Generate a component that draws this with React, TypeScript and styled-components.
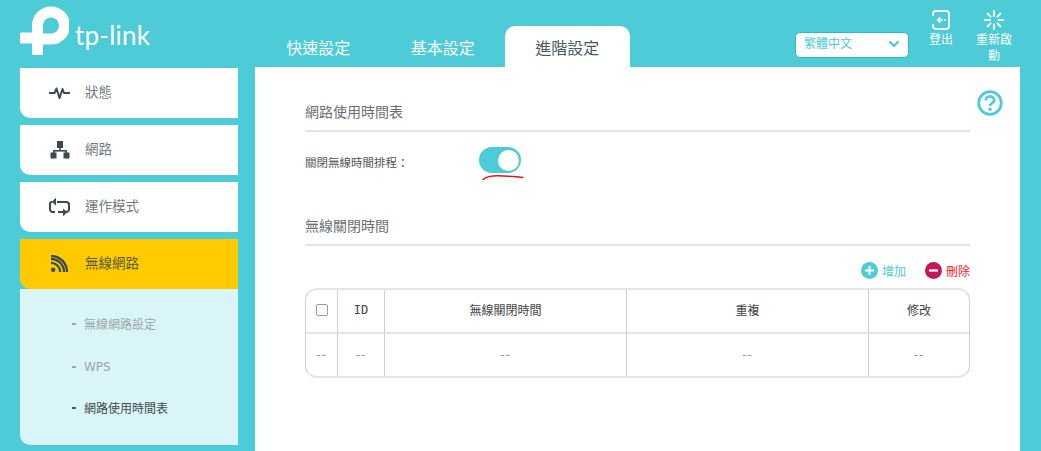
import React from "react";
import styled, { createGlobalStyle } from "styled-components";

const TEAL = "#4dcbd7";
const FONT = `"DejaVu Sans", "Noto Sans CJK TC", "Noto Sans", sans-serif`;

const Global = createGlobalStyle`
  html, body { margin: 0; padding: 0; background: ${TEAL}; }
  * { box-sizing: border-box; }
  body { font-family: ${FONT}; }
`;

const Page = styled.div`
  width: 1041px;
  height: 451px;
  overflow: hidden;
  background: ${TEAL};
  display: flex;
  flex-direction: column;
`;

const Header = styled.header`
  height: 67px;
  flex: none;
  display: flex;
  align-items: flex-start;
`;

const Logo = styled.div`
  width: 256px;
  height: 67px;
  padding: 6px 0 0 20px;
  display: flex;
  align-items: flex-start;
  gap: 6px;
  flex: none;
`;

const LogoWord = styled.span`
  font-family: "Lato", "Open Sans", sans-serif;
  font-weight: 400;
  font-size: 26px;
  line-height: 30px;
  letter-spacing: 0.2px;
  color: #fff;
  margin-top: 14px;
`;

const Tabs = styled.nav`
  display: flex;
  padding-top: 26px;
  height: 67px;
  width: 539px;
  flex: none;
`;

const Tab = styled.div<{ $active?: boolean }>`
  width: 124.5px;
  height: 41px;
  display: flex;
  align-items: center;
  justify-content: center;
  font-size: 16px;
  border-radius: 10px 10px 0 0;
  color: ${(p) => (p.$active ? "#4a5a63" : "#fff")};
  background: ${(p) => (p.$active ? "#fff" : "transparent")};
`;

const LangSelect = styled.div`
  width: 114px;
  height: 26px;
  margin-top: 32px;
  flex: none;
  background: #fff;
  border: 1px solid #33b5c2;
  border-radius: 5px;
  padding: 0 8px 2px 8px;
  display: flex;
  align-items: center;
  justify-content: space-between;
  color: ${TEAL};
  font-size: 12px;
  line-height: 22px;
`;

const HeadActions = styled.div`
  display: flex;
  align-items: flex-start;
  margin-left: 14px;
  gap: 15px;
`;

const HeadAction = styled.div<{ $w: number }>`
  width: ${(p) => p.$w}px;
  padding-top: 10px;
  display: flex;
  flex-direction: column;
  align-items: center;
  text-align: center;
  color: #fff;
  font-size: 12px;
  line-height: 16px;
  svg { margin-bottom: 2px; }
`;

const Body = styled.div`
  flex: 1;
  min-height: 0;
  display: flex;
  padding: 0 21px 0 20px;
  gap: 17px;
`;

const Sidebar = styled.aside`
  width: 218px;
  flex: none;
  padding-top: 1px;
  display: flex;
  flex-direction: column;
  gap: 7px;
`;

const MenuItem = styled.div<{ $active?: boolean }>`
  height: 50px;
  display: flex;
  align-items: center;
  padding-left: 29px;
  gap: 15px;
  font-size: 13.5px;
  color: ${(p) => (p.$active ? "#5a5a3c" : "#717a80")};
  background: ${(p) => (p.$active ? "#ffcb00" : "#fff")};
  border-radius: 0 0 0 10px;
`;

const MenuLabel = styled.span`
  margin-bottom: 5px;
`;

const MenuIcon = styled.span`
  width: 21px;
  height: 20px;
  display: flex;
  align-items: center;
  justify-content: center;
  flex: none;
  margin-bottom: 1px;
`;

const MenuGroup = styled.div``;

const SubMenu = styled.div`
  padding: 15px 0 15px 52px;
  background: #d9f5f7;
  border-radius: 0 0 0 10px;
  display: flex;
  flex-direction: column;
`;

const SubItem = styled.div<{ $current?: boolean; $latin?: boolean }>`
  height: 42px;
  padding-bottom: ${(p) => (p.$latin ? 0 : 4)}px;
  display: flex;
  align-items: center;
  gap: 8px;
  font-size: 12px;
  color: ${(p) => (p.$current ? "#3f4a50" : "#9aa6a9")};
  &::before {
    content: "";
    width: 4px;
    height: 1.5px;
    margin-top: ${(p) => (p.$latin ? 0 : 2)}px;
    background: ${(p) => (p.$current ? "#4a5a63" : "#9aa6a9")};
  }
`;

const Main = styled.main`
  position: relative;
  width: 765px;
  flex: none;
  background: #fff;
  padding: 37px 50px 0;
`;

const HelpButton = styled.div`
  position: absolute;
  top: 23px;
  right: 17px;
  width: 26px;
  height: 26px;
`;

const SectionTitle = styled.h2<{ $tall?: boolean }>`
  margin: 0;
  height: ${(p) => (p.$tall ? 29 : 28)}px;
  padding-top: ${(p) => (p.$tall ? 1 : 0)}px;
  font-size: 14px;
  font-weight: 400;
  line-height: 16px;
  color: #6a7073;
  border-bottom: 2px solid #e3e3e3;
`;

const SwitchRow = styled.div`
  display: flex;
  align-items: center;
  height: 30px;
  margin-top: 13px;
  margin-bottom: 42px;
`;

const SwitchLabel = styled.label`
  width: 174px;
  padding-top: 4px;
  font-size: 11.5px;
  color: #555;
`;

const SwitchWrap = styled.div`
  position: relative;
  width: 42px;
  height: 26px;
`;

const Track = styled.div`
  width: 42px;
  height: 26px;
  border-radius: 13px;
  background: ${TEAL};
  display: flex;
  align-items: center;
  justify-content: flex-end;
  padding-right: 2px;
`;

const Knob = styled.div`
  width: 21px;
  height: 21px;
  border-radius: 50%;
  background: #fff;
`;

const RedMark = styled.svg`
  position: absolute;
  left: 2px;
  top: 26px;
`;

const Toolbar = styled.div`
  display: flex;
  justify-content: flex-end;
  align-items: center;
  gap: 19px;
  height: 18px;
  margin-top: 15px;
`;

const ToolButton = styled.div<{ $color: string }>`
  display: flex;
  align-items: center;
  gap: 4px;
  font-size: 12px;
  color: ${(p) => p.$color};
`;

const TableFrame = styled.div`
  margin-top: 9px;
  height: 90px;
  border: 2px solid #e5e5e5;
  border-left: 1px solid #cfcfcf;
  border-right: 1px solid #cfcfcf;
  border-radius: 12px;
  overflow: hidden;
`;

const Table = styled.table`
  width: 100%;
  height: 100%;
  table-layout: fixed;
  border-collapse: separate;
  border-spacing: 0;
`;

const Th = styled.th`
  height: 44px;
  padding: 0 0 3px;
  font-size: 12px;
  font-weight: 400;
  color: #444;
  text-align: center;
  border-right: 1px solid #cfcfcf;
  border-bottom: 2px solid #e5e5e5;
  &:last-child { border-right: 0; }
`;

const MonoTh = styled(Th)`
  font-family: "DejaVu Sans Mono", "Liberation Mono", monospace;
`;

const Td = styled.td`
  padding: 0 0 1px;
  font-size: 12px;
  letter-spacing: 1px;
  color: #8a9296;
  text-align: center;
  border-right: 1px solid #cfcfcf;
  &:last-child { border-right: 0; }
`;

const CheckBox = styled.span`
  display: inline-block;
  width: 12px;
  height: 12px;
  vertical-align: middle;
  border: 1px solid #9b9b9b;
  border-radius: 2px;
  background: #fff;
`;

const LogoMark = () => (
  <svg width="49" height="49" viewBox="20 6 49 49">
    <path d="M37.5 30V25.5A13.5 13.5 0 1 1 51 39H36" fill="none" stroke="#fff" strokeWidth="11" />
    <rect x="32" y="28" width="11" height="27" rx="1.5" fill="#fff" />
    <rect x="20" y="32.500" width="20" height="11" rx="1.5" fill="#fff" />
  </svg>
);

const Chevron = () => (
  <svg width="12" height="8" viewBox="0 0 12 8">
    <path d="M2 2l4 4 4-4" fill="none" stroke={TEAL} strokeWidth="2.4" strokeLinecap="round" strokeLinejoin="round" />
  </svg>
);

const LogoutIcon = () => (
  <svg width="20" height="20" viewBox="0 0 20 20" fill="none">
    <path d="M2 6V4a3 3 0 0 1 3-3h10a3 3 0 0 1 3 3v12a3 3 0 0 1-3 3H5a3 3 0 0 1-3-3v-2" stroke="#fff" strokeWidth="1.8" />
    <path d="M9 7l-3 3 3 3z" fill="#fff" stroke="#fff" strokeWidth="1" strokeLinejoin="round" />
    <path d="M10 10h1.5M13 10h1.5" stroke="#fff" strokeWidth="1.8" />
  </svg>
);

const RestartIcon = () => (
  <svg width="20" height="20" viewBox="0 0 20 20" fill="none" stroke="#fff" strokeWidth="1.9" strokeLinecap="round">
    <path d="M10 1v5M10 14.500v4.500M1 10h5M14.500 10H19M3.600 3.600l3 3M13.400 13.400l3 3M3.600 16.400l3-3M13.400 6.600l3-3" />
  </svg>
);

const PulseIcon = () => (
  <svg width="21" height="14" viewBox="0 0 21 14" fill="none">
    <path d="M0 7h5.500l2-4.500 3 9.500 3-9 1.500 4H21" stroke="#3d4a54" strokeWidth="2" strokeLinejoin="round" />
  </svg>
);

const NetworkIcon = () => (
  <svg width="20" height="18" viewBox="0 0 20 18" fill="#3d4a54">
    <rect x="7" y="0" width="6" height="7" />
    <rect x="9.200" y="7" width="1.600" height="3" />
    <rect x="3" y="9" width="14" height="1.600" />
    <rect x="3" y="9" width="1.600" height="3" />
    <rect x="15.400" y="9" width="1.600" height="3" />
    <rect x="0.500" y="11.500" width="6" height="6" />
    <rect x="13.500" y="11.500" width="6" height="6" />
  </svg>
);

const ModeIcon = () => (
  <svg width="21" height="20" viewBox="0 0 21 20" fill="none" stroke="#3d4a54" strokeWidth="2.100">
    <path d="M3.500 5H2.800A1.800 1.800 0 0 0 1 6.800v5.400A2.800 2.800 0 0 0 3.800 15H6" />
    <path d="M8 5h9.200A2.800 2.800 0 0 1 20 7.800v4.400A2.800 2.800 0 0 1 17.200 15H9" />
    <path d="M6.500 1.500L3.500 5l3 2.800z" fill="#3d4a54" strokeWidth="1" strokeLinejoin="round" />
    <path d="M14.500 12.200l3 2.800-3 3.500z" fill="#3d4a54" strokeWidth="1" strokeLinejoin="round" />
  </svg>
);

const WifiIcon = () => (
  <svg width="17" height="17" viewBox="0 0 17 17" fill="none" stroke="#3d4a54" strokeWidth="2.300">
    <circle cx="2.200" cy="14.800" r="2.200" fill="#3d4a54" stroke="none" />
    <path d="M0 7.800a9.200 9.200 0 0 1 9.200 9.200" />
    <path d="M0 4a13 13 0 0 1 13 13" />
    <path d="M0 1a16 16 0 0 1 16 16" />
  </svg>
);

const HelpIcon = () => (
  <svg width="26" height="26" viewBox="0 0 26 26" fill="none">
    <circle cx="13" cy="13" r="11.300" stroke={TEAL} strokeWidth="2.800" />
    <path d="M8.800 10.500a4.200 4.200 0 0 1 8.400 0c0 2.500-4.200 2.800-4.200 5.500" stroke={TEAL} strokeWidth="2.800" />
    <circle cx="13" cy="19.300" r="1.700" fill={TEAL} />
  </svg>
);

const PlusIcon = () => (
  <svg width="17" height="17" viewBox="0 0 17 17">
    <circle cx="8.500" cy="8.500" r="8.500" fill={TEAL} />
    <path d="M8.500 4v9M4 8.500h9" stroke="#fff" strokeWidth="2" />
  </svg>
);

const MinusIcon = () => (
  <svg width="17" height="17" viewBox="0 0 17 17">
    <circle cx="8.500" cy="8.500" r="8.500" fill="#c2185b" />
    <path d="M4 8.500h9" stroke="#fff" strokeWidth="2.200" />
  </svg>
);

export default function App() {
  return (
    <Page>
      <Global />
      <Header>
        <Logo>
          <LogoMark />
          <LogoWord>tp-link</LogoWord>
        </Logo>
        <Tabs>
          <Tab>快速設定</Tab>
          <Tab>基本設定</Tab>
          <Tab $active>進階設定</Tab>
        </Tabs>
        <LangSelect>
          繁體中文
          <Chevron />
        </LangSelect>
        <HeadActions>
          <HeadAction $w={36}>
            <LogoutIcon />
            登出
          </HeadAction>
          <HeadAction $w={40}>
            <RestartIcon />
            重新啟動
          </HeadAction>
        </HeadActions>
      </Header>
      <Body>
        <Sidebar>
          <MenuItem><MenuIcon><PulseIcon /></MenuIcon><MenuLabel>狀態</MenuLabel></MenuItem>
          <MenuItem><MenuIcon><NetworkIcon /></MenuIcon><MenuLabel>網路</MenuLabel></MenuItem>
          <MenuItem><MenuIcon><ModeIcon /></MenuIcon><MenuLabel>運作模式</MenuLabel></MenuItem>
          <MenuGroup>
            <MenuItem $active><MenuIcon><WifiIcon /></MenuIcon><MenuLabel>無線網路</MenuLabel></MenuItem>
            <SubMenu>
              <SubItem>無線網路設定</SubItem>
              <SubItem $latin>WPS</SubItem>
              <SubItem $current>網路使用時間表</SubItem>
            </SubMenu>
          </MenuGroup>
        </Sidebar>
        <Main>
          <HelpButton><HelpIcon /></HelpButton>
          <SectionTitle>網路使用時間表</SectionTitle>
          <SwitchRow>
            <SwitchLabel>關閉無線時間排程：</SwitchLabel>
            <SwitchWrap>
              <Track><Knob /></Track>
              <RedMark width="44" height="8" viewBox="0 0 44 8" fill="none">
                <path d="M2 6.500C6 3 14 2.500 22 3c7 .4 14 .5 20 1.500" stroke="#e8141c" strokeWidth="1.500" strokeLinecap="round" />
              </RedMark>
            </SwitchWrap>
          </SwitchRow>
          <SectionTitle $tall>無線關閉時間</SectionTitle>
          <Toolbar>
            <ToolButton $color={TEAL}><PlusIcon />增加</ToolButton>
            <ToolButton $color="#f01c1c"><MinusIcon />刪除</ToolButton>
          </Toolbar>
          <TableFrame>
            <Table>
              <colgroup>
                <col style={{ width: 32 }} />
                <col style={{ width: 47 }} />
                <col style={{ width: 242 }} />
                <col style={{ width: 242 }} />
                <col />
              </colgroup>
              <thead>
                <tr>
                  <Th><CheckBox /></Th>
                  <MonoTh>ID</MonoTh>
                  <Th>無線關閉時間</Th>
                  <Th>重複</Th>
                  <Th>修改</Th>
                </tr>
              </thead>
              <tbody>
                <tr>
                  <Td>--</Td>
                  <Td>--</Td>
                  <Td>--</Td>
                  <Td>--</Td>
                  <Td>--</Td>
                </tr>
              </tbody>
            </Table>
          </TableFrame>
        </Main>
      </Body>
    </Page>
  );
}
